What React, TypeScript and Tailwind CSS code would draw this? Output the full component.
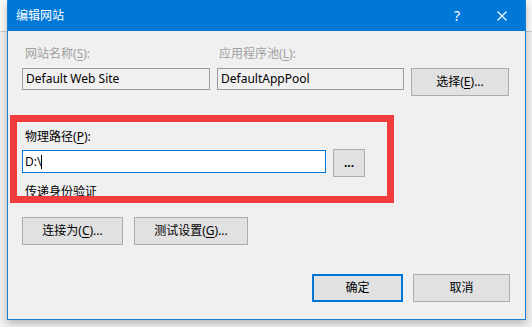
import React from "react";

const font = "font-['Noto_Sans','Noto_Sans_CJK_SC',sans-serif]";

const Key = ({ k }: { k: string }) => (
  <>
    (<span className="underline underline-offset-2">{k}</span>)
  </>
);

const Button = ({
  width,
  children,
  primary = false,
}: {
  width: string;
  children: React.ReactNode;
  primary?: boolean;
}) => (
  <button
    className={`${width} h-[28px] flex items-center justify-center bg-[#e1e1e1] text-[12px] text-black ${
      primary ? "border-2 border-[#0078d7]" : "border border-[#adadad]"
    }`}
  >
    {children}
  </button>
);

const EditSiteDialog = () => {
  return (
    <div
      className={`relative w-[532px] h-[327px] overflow-hidden bg-[linear-gradient(to_bottom,#fafafa_31px,#cdcdcd_31px,#cdcdcd_32px,#f0f0f0_32px)] ${font}`}
    >
      <div className="ml-[7px] w-[519px] h-[320px] flex flex-col bg-[#f0f0f0] border border-t-0 border-[#1a7fd4] shadow-[0_3px_8px_rgba(0,0,0,0.25)]">
        {/* title bar */}
        <div className="h-[31px] flex items-center bg-[#0078d7] text-white">
          <span className="ml-[8px] text-[12px]">编辑网站</span>
          <div className="ml-auto flex items-center">
            <span className="w-[20px] text-center text-[14px]">?</span>
            <svg
              width="10"
              height="10"
              viewBox="0 0 10 10"
              className="ml-[30px] mr-[18px]"
            >
              <path d="M0.5 0.5L9.5 9.5M9.5 0.5L0.5 9.5" stroke="#fff" strokeWidth="1.1" />
            </svg>
          </div>
        </div>

        {/* body */}
        <div className="flex flex-col pl-[14px] pr-[15px] pt-[15px] text-[12px] text-black">
          <div className="flex h-[16px] leading-[16px] text-[#a0a0a0]">
            <span className="w-[195px] pl-[3px]">
              网站名称<Key k="S" />:
            </span>
            <span className="pl-[2px]">
              应用程序池<Key k="L" />:
            </span>
          </div>
          <div className="mt-[6px] flex items-start gap-[7px]">
            <div className="w-[188px] h-[22px] flex items-center pl-[3px] border border-[#9a9a9a] bg-[#f0f0f0]">
              Default Web Site
            </div>
            <div className="w-[187px] h-[22px] flex items-center pl-[3px] border border-[#9a9a9a] bg-[#f0f0f0]">
              DefaultAppPool
            </div>
            <Button width="w-[98px]">
              选择<Key k="E" />...
            </Button>
          </div>

          <div className="mt-[33px] h-[16px] leading-[16px] pl-[3px]">
            物理路径<Key k="P" />:
          </div>
          <div className="mt-[4px] flex items-start gap-[7px]">
            <div className="mt-[1px] w-[304px] h-[23px] flex items-center pl-[2px] border border-[#0078d7] bg-white">
              D:\<span className="w-px h-[14px] bg-black" />
            </div>
            <Button width="w-[32px]">
              <span className="font-bold leading-none">...</span>
            </Button>
          </div>
          <div className="mt-[7px] h-[16px] leading-[16px] pl-[3px]">传递身份验证</div>

          <div className="mt-[17px] flex gap-[11px]">
            <Button width="w-[101px]">
              连接为<Key k="C" />...
            </Button>
            <Button width="w-[114px]">
              测试设置<Key k="G" />...
            </Button>
          </div>

          <div className="mt-[29px] flex justify-end gap-[10px]">
            <Button width="w-[91px]" primary>
              确定
            </Button>
            <Button width="w-[97px]">取消</Button>
          </div>
        </div>
      </div>

      {/* red annotation frame */}
      <div className="absolute left-[10px] top-[115px] w-[384px] h-[88px] border-[7px] border-[#f03c3c]" />
    </div>
  );
};

export default function App() {
  return <EditSiteDialog />;
}
